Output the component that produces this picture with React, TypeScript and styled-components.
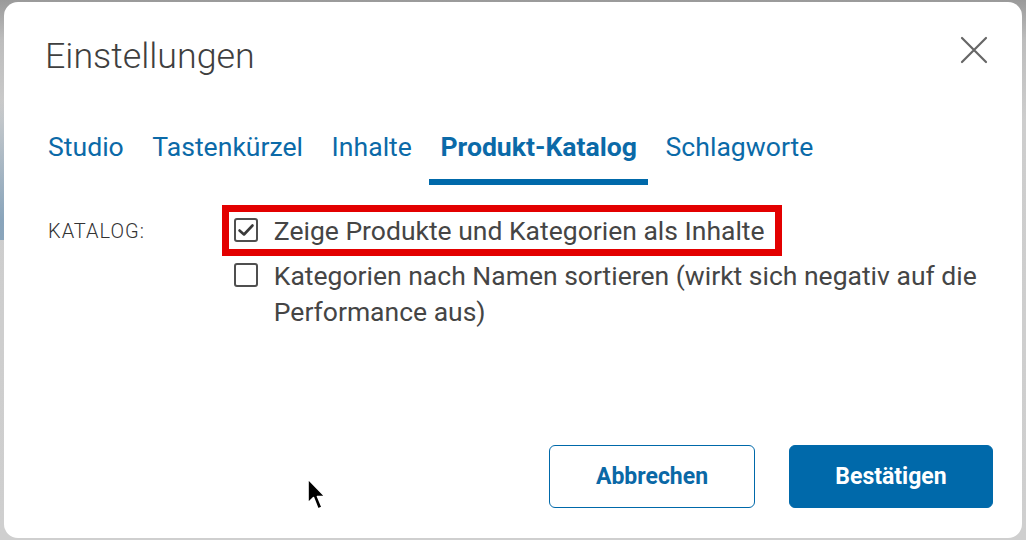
import React from "react";
import styled, { createGlobalStyle } from "styled-components";

const GlobalStyle = createGlobalStyle`
  html, body {
    margin: 0;
    padding: 0;
    width: 1026px;
    height: 540px;
    overflow: hidden;
  }
  body {
    font-family: Roboto, "Liberation Sans", sans-serif;
    background:
      linear-gradient(180deg, rgba(150,175,195,0) 0, rgba(130,160,185,0.9) 120px, rgba(130,160,185,0.9) 170px, rgba(150,175,195,0) 200px) left 0 top 100px / 4px 140px no-repeat,
      linear-gradient(180deg, #9a9a9a 0, #bdbdbd 40px, #cdcdcd 120px, #cfcfcf 100%);
  }
`;

const Backdrop = styled.div`
  position: relative;
  width: 1026px;
  height: 540px;
  box-sizing: border-box;
  padding: 2px 4px 2px 4px;
`;

const Dialog = styled.div`
  background: #fff;
  border-radius: 14px;
  height: 100%;
  box-sizing: border-box;
  display: flex;
  flex-direction: column;
  padding: 0 29px 30px 0;
`;

const Header = styled.header`
  display: flex;
  align-items: flex-start;
  justify-content: space-between;
  padding: 32px 0 0 41px;
  height: 44px;
`;

const Title = styled.h1`
  margin: 0;
  font-size: 35.8px;
  line-height: 44px;
  font-weight: 300;
  color: #3f3f3f;
`;

const CloseButton = styled.button`
  border: none;
  background: none;
  padding: 0;
  width: 30px;
  height: 30px;
  margin: 1px 4px 0 0;
  display: flex;
  align-items: center;
  justify-content: center;
`;

const TabList = styled.nav`
  display: flex;
  gap: 6.5px;
  padding-left: 33px;
  margin-top: 53px;
`;

const Tab = styled.div<{ $active?: boolean }>`
  font-size: 26.6px;
  line-height: 32px;
  padding: 0 11px 16px;
  color: #0b6aa8;
  font-weight: ${(p) => (p.$active ? 700 : 400)};
  border-bottom: 6px solid ${(p) => (p.$active ? "#0069aa" : "transparent")};
`;

const Body = styled.section`
  display: flex;
  padding: 28px 0 0 44px;
  flex: 1;
`;

const Label = styled.div`
  width: 186px;
  font-size: 20px;
  line-height: 36px;
  font-weight: 300;
  color: #333;
  letter-spacing: 1px;
`;

const Options = styled.div`
  display: flex;
  flex-direction: column;
  align-items: flex-start;
  gap: 9px;
`;

const Option = styled.label<{ $highlight?: boolean }>`
  position: relative;
  display: flex;
  align-items: flex-start;
  gap: 16px;
  font-size: 26.5px;
  line-height: 36px;
  color: #454545;
  max-width: 760px;
  ${(p) =>
    p.$highlight &&
    `
    &::after {
      content: "";
      position: absolute;
      left: -12px;
      right: -17px;
      top: -8px;
      bottom: -7px;
      border: 7px solid #e30000;
    }
  `}
`;

const Box = styled.span`
  flex: none;
  width: 20px;
  height: 20px;
  margin-top: 5px;
  border: 2.5px solid #4f4f4f;
  border-radius: 3px;
  display: flex;
  align-items: center;
  justify-content: center;
`;

const Footer = styled.footer`
  display: flex;
  justify-content: flex-end;
  gap: 34px;
`;

const Button = styled.button<{ $primary?: boolean }>`
  width: ${(p) => (p.$primary ? 204 : 206)}px;
  height: 63px;
  border-radius: 6px;
  font-family: Roboto, "Liberation Sans", sans-serif;
  font-size: 23px;
  font-weight: 700;
  border: 1px solid #0069aa;
  background: ${(p) => (p.$primary ? "#0069aa" : "#fff")};
  color: ${(p) => (p.$primary ? "#fff" : "#0a68a6")};
`;

const Cursor = styled.svg`
  position: absolute;
  left: 306px;
  top: 477px;
`;

const Checkbox = ({ checked }: { checked?: boolean }) => (
  <Box>
    {checked && (
      <svg width="18" height="18" viewBox="0 0 18 18">
        <path d="M2.5 9.5 L7 13.5 L15.5 4.5" fill="none" stroke="#3a3a3a" strokeWidth="2.6" strokeLinecap="round" strokeLinejoin="round" />
      </svg>
    )}
  </Box>
);

const tabs = ["Studio", "Tastenkürzel", "Inhalte", "Produkt-Katalog", "Schlagworte"];

export default function App() {
  return (
    <>
      <GlobalStyle />
      <Backdrop>
        <Dialog>
          <Header>
            <Title>Einstellungen</Title>
            <CloseButton aria-label="Schließen">
              <svg width="28" height="28" viewBox="0 0 28 28">
                <path d="M2 2 L26 26 M26 2 L2 26" stroke="#666" strokeWidth="2.2" strokeLinecap="round" />
              </svg>
            </CloseButton>
          </Header>
          <TabList>
            {tabs.map((t) => (
              <Tab key={t} $active={t === "Produkt-Katalog"}>
                {t}
              </Tab>
            ))}
          </TabList>
          <Body>
            <Label>KATALOG:</Label>
            <Options>
              <Option $highlight>
                <Checkbox checked />
                <span>Zeige Produkte und Kategorien als Inhalte</span>
              </Option>
              <Option>
                <Checkbox />
                <span>Kategorien nach Namen sortieren (wirkt sich negativ auf die Performance aus)</span>
              </Option>
            </Options>
          </Body>
          <Footer>
            <Button>Abbrechen</Button>
            <Button $primary>Bestätigen</Button>
          </Footer>
        </Dialog>
        <Cursor width="22" height="36" viewBox="0 0 22 36">
          <path d="M2 2 L2 26 L7.5 20.5 L12 32 L16 30.3 L11.5 19.5 L19 19.5 Z" fill="#000" stroke="#fff" strokeWidth="1.6" strokeLinejoin="round" />
        </Cursor>
      </Backdrop>
    </>
  );
}
